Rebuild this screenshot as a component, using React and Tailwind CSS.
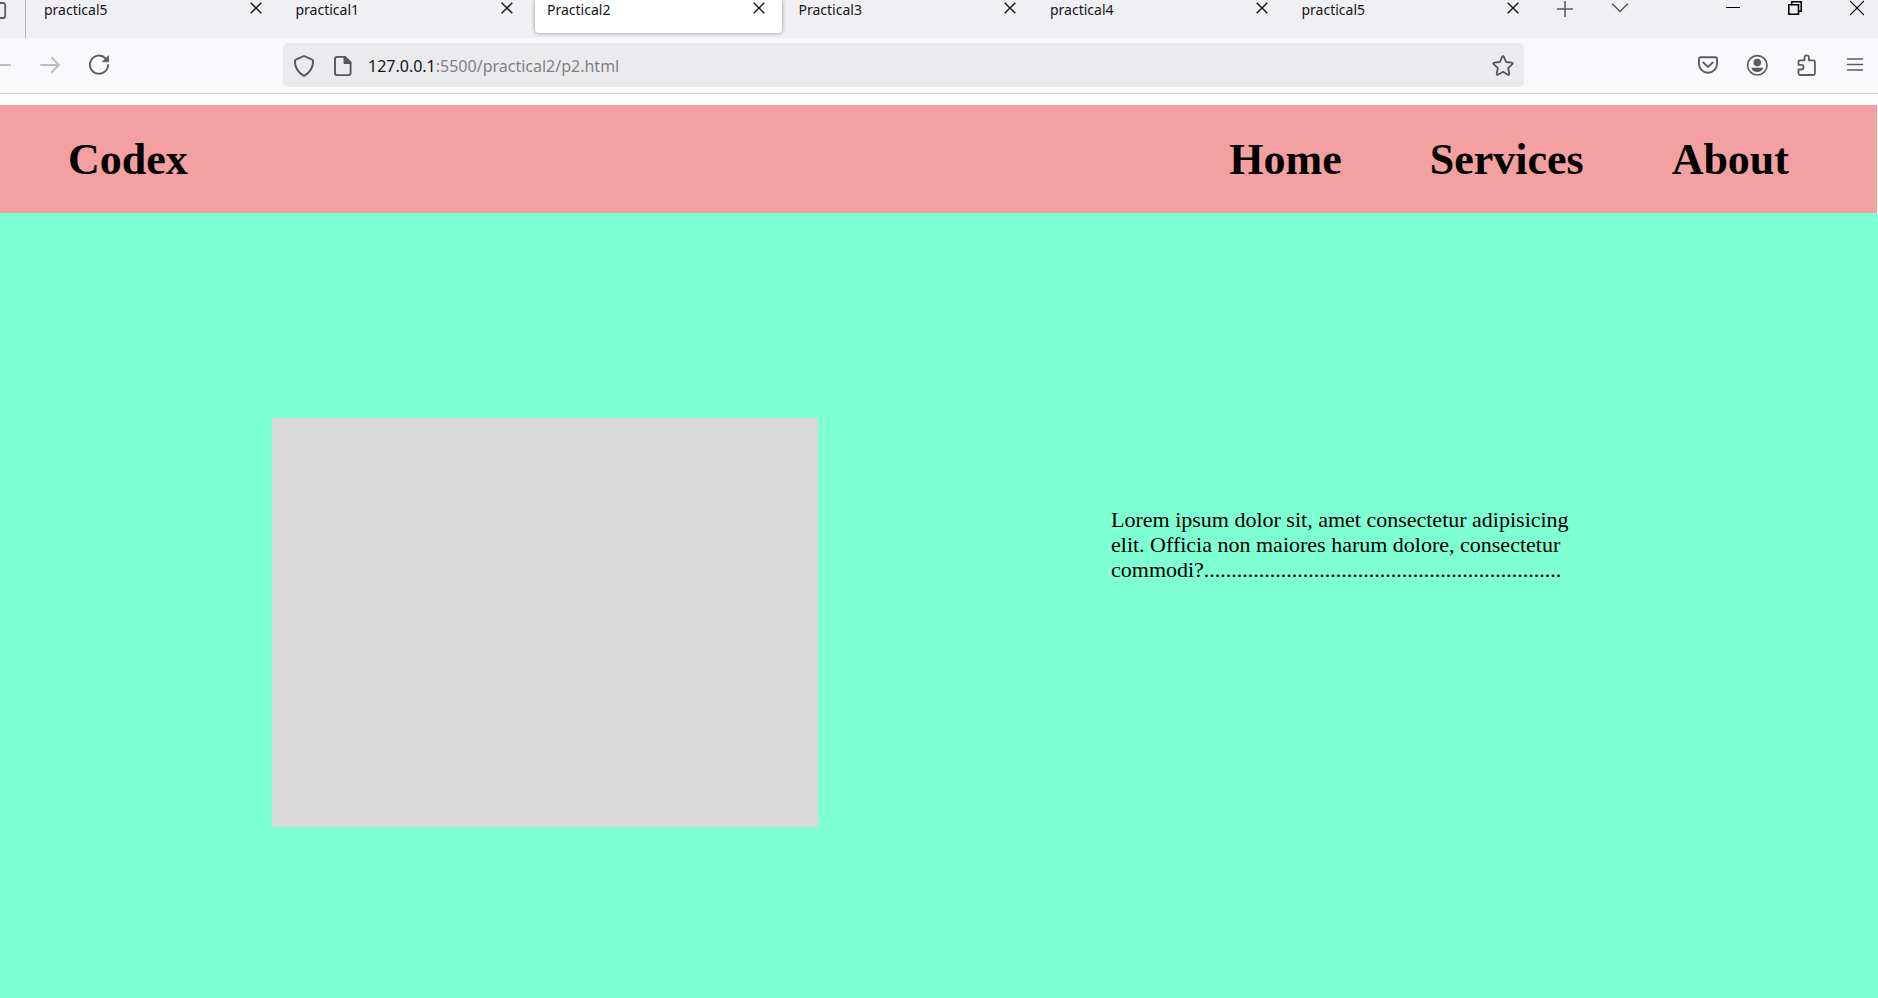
import React from "react";

const tabs = ["practical5", "practical1", "Practical2", "Practical3", "practical4", "practical5"];

function Close() {
  return (
    <svg width="12" height="12" viewBox="0 0 12 12" fill="none" stroke="#15141a" strokeWidth="1.4">
      <path d="M.7.7l10.600 10.600M11.300.7L.7 11.300" />
    </svg>
  );
}

function Tab({ title, active }) {
  return (
    <div
      className={
        active
          ? "flex h-[33px] min-w-0 flex-1 items-start rounded-b-[4px] bg-white pl-3 pr-[15px] shadow-[0_0_4px_rgba(0,0,0,0.4)]"
          : "flex h-[33px] min-w-0 flex-1 items-start pl-3 pr-[15px]"
      }
    >
      <button className="grow text-left text-[14px] leading-[19px] text-[#15141a]">{title}</button>
      <button aria-label={"Close " + title} className="flex size-4 items-center justify-center">
        <Close />
      </button>
    </div>
  );
}

function TabBar() {
  return (
    <div className="flex h-[38px] items-start overflow-hidden bg-[#f0eff4]">
      <button aria-label="Tab overview" className="h-[38px] w-[26px] shrink-0 border-r border-[#b4b3ba]">
        <svg width="8" height="20" viewBox="0 0 8 20" fill="none" stroke="#5b5b66" strokeWidth="1.800" className="-mt-[18px]">
          <path d="M-6 3H3.200a2 2 0 0 1 2 2v11a2 2 0 0 1-2 2H-6" />
        </svg>
      </button>
      <div className="ml-[6px] flex w-[1504px] shrink gap-[5px]">
        {tabs.map((t, i) => (
          <Tab key={i} title={t} active={i === 2} />
        ))}
      </div>
      <button aria-label="New tab" className="ml-5 shrink-0">
        <svg width="18" height="18" viewBox="0 0 18 18" fill="none" stroke="#5b5b66" strokeWidth="1.600">
          <path d="M9 1v16M1 9h16" />
        </svg>
      </button>
      <button aria-label="List all tabs" className="ml-[37px] shrink-0">
        <svg width="18" height="16" viewBox="0 0 18 16" fill="none" stroke="#5b5b66" strokeWidth="1.600" strokeLinecap="round" strokeLinejoin="round">
          <path d="M1.500 4L9 11.500 16.500 4" />
        </svg>
      </button>
      <div className="ml-auto flex shrink-0 gap-12 pr-[14px]">
        <button aria-label="Minimize">
          <svg width="14" height="16" viewBox="0 0 14 16" stroke="#000"><path d="M0 7.500h14" /></svg>
        </button>
        <button aria-label="Restore">
          <svg width="14" height="16" viewBox="0 0 14 16" fill="none" stroke="#000" strokeWidth="1.600">
            <path d="M.8 4.800h9.700v9.400H.8zM3.700 4.500V1.800h9.500v9.400h-2.700" />
          </svg>
        </button>
        <button aria-label="Close window">
          <svg width="14" height="16" viewBox="0 0 14 16" stroke="#000" strokeWidth="1.200"><path d="M0 1l14 14M14 1L0 15" /></svg>
        </button>
      </div>
    </div>
  );
}

function NavBar() {
  return (
    <div className="flex h-14 items-center border-b border-[#cccccc] bg-[#f9f9fb] pb-px">
      <button aria-label="Back" disabled className="w-[38px]">
        <svg width="12" height="20" viewBox="0 0 12 20" fill="none" stroke="#bebec4" strokeWidth="2" strokeLinecap="round">
          <path d="M-8 10H10M-1 3l-7 7 7 7" />
        </svg>
      </button>
      <button aria-label="Forward" disabled className="w-[50px]">
        <svg width="24" height="20" viewBox="0 0 24 20" fill="none" stroke="#bebec4" strokeWidth="2" strokeLinecap="round" strokeLinejoin="round">
          <path d="M3 10h18M14 3l7 7-7 7" />
        </svg>
      </button>
      <button aria-label="Reload">
        <svg width="22" height="22" viewBox="0 0 22 22" fill="none" stroke="#5b5b66" strokeWidth="1.900" strokeLinecap="round">
          <path d="M17.600 4.400A9.100 9.100 0 1 0 20.100 11" />
          <path d="M20.500 2v5.800h-5.800z" fill="#5b5b66" strokeWidth="0.800" strokeLinejoin="round" />
        </svg>
      </button>
      <div className="ml-[173px] flex h-11 w-[1241px] shrink items-center rounded-[5px] bg-[#ebebed] pl-[10px] pr-[10px] pt-[2px]">
        <button aria-label="Site protections">
          <svg width="22" height="22" viewBox="0 0 22 22" fill="none" stroke="#55555a" strokeWidth="1.900" strokeLinejoin="round">
            <path d="M11 1l8.200 3.600c.6.300.9.700.9 1.300 0 6-2.600 11.500-9.100 14.900C4.500 17.400 1.900 11.900 1.900 5.900c0-.6.300-1 .9-1.300z" />
          </svg>
        </button>
        <button aria-label="Site information" className="ml-[17px]">
          <svg width="22" height="22" viewBox="0 0 22 22" fill="none" stroke="#55555a" strokeWidth="1.900" strokeLinejoin="round">
            <path d="M5 1.900h8L18.600 7.500v10.600a2 2 0 0 1-2 2H5a2 2 0 0 1-2-2V3.900a2 2 0 0 1 2-2z" />
            <path d="M12.500 2v6h6z" fill="#55555a" />
          </svg>
        </button>
        <a href="#page" className="ml-[14px] grow text-[16px] leading-6 text-[#808085]">
          <span className="text-[#15141a]">127.0.0.1</span>:5500/practical2/p2.html
        </a>
        <button aria-label="Bookmark this page">
          <svg width="22" height="22" viewBox="0 0 22 22" fill="none" stroke="#55555a" strokeWidth="1.800" strokeLinejoin="round">
            <path d="M10.200 1.700a.9.900 0 0 1 1.600 0l2.300 5.300 5.700.6a.9.900 0 0 1 .5 1.600l-4.200 3.900 1.200 5.700a.9.900 0 0 1-1.300 1L11 16.800l-5 3a.9.900 0 0 1-1.300-1l1.200-5.700L1.700 9.200a.9.900 0 0 1 .5-1.600L7.900 7z" />
          </svg>
        </button>
      </div>
      <div className="ml-auto flex shrink-0 gap-[27px] pr-[12px]">
        <button aria-label="Save to Pocket">
          <svg width="22" height="22" viewBox="0 0 22 22" fill="none" stroke="#5b5b66" strokeWidth="1.900" strokeLinecap="round" strokeLinejoin="round">
            <path d="M3.700 3.200h14.600a1.700 1.700 0 0 1 1.700 1.700v4.900a9 9 0 0 1-18 0V4.900a1.700 1.700 0 0 1 1.700-1.700z" />
            <path d="M6.300 8.500L11 12.900l4.700-4.400" />
          </svg>
        </button>
        <button aria-label="Account">
          <svg width="22" height="22" viewBox="0 0 22 22" fill="none" stroke="#5b5b66" strokeWidth="1.700">
            <circle cx="11.300" cy="11.300" r="9.700" />
            <circle cx="11.300" cy="8.600" r="3.800" fill="#5b5b66" stroke="none" />
            <path d="M5.500 13.700h11.600c0 2.500-2.800 4.200-5.800 4.200s-5.800-1.700-5.800-4.200z" fill="#5b5b66" stroke="none" />
          </svg>
        </button>
        <button aria-label="Extensions">
          <svg width="22" height="22" viewBox="0 0 22 22" fill="none" stroke="#5b5b66" strokeWidth="1.800" strokeLinejoin="round">
            <path d="M5 6.300h4.500V3.500a2.200 2.200 0 0 1 4.400 0v2.800h4.500a1.500 1.500 0 0 1 1.500 1.500v11.700a1.500 1.500 0 0 1-1.500 1.500H5a1.500 1.500 0 0 1-1.500-1.500v-4h2.700a2.300 2.300 0 0 0 0-4.600H3.500V7.800A1.500 1.500 0 0 1 5 6.300z" />
          </svg>
        </button>
        <button aria-label="Application menu">
          <svg width="22" height="22" viewBox="0 0 22 22" fill="none" stroke="#5b5b66" strokeWidth="1.600" strokeLinecap="round">
            <path d="M3.500 5h15M3.500 10.500h15M3.500 16h15" />
          </svg>
        </button>
      </div>
    </div>
  );
}

export default function App() {
  return (
    <div className="flex min-h-screen flex-col bg-white font-['Noto_Sans','Open_Sans',sans-serif]">
      <TabBar />
      <NavBar />
      <div id="page" className="mt-[11px] flex grow flex-col font-['Liberation_Serif',serif] text-black">
        <header className="mr-px flex h-[108px] items-center justify-between bg-[#f4a0a0] pl-[68px] pr-[88px] pt-[2px] text-[44px] font-bold leading-[52px]">
          <h1>Codex</h1>
          <nav className="flex gap-[88px]">
            <a href="#home">Home</a>
            <a href="#services">Services</a>
            <a href="#about">About</a>
          </nav>
        </header>
        <main className="flex grow items-start bg-[#7fffd4] pl-[272px] pt-[205px]">
          <div className="h-[409px] w-[546px] bg-[#d9d9d9]" />
          <p className="ml-[293px] mt-[89px] w-[460px] text-[22px] leading-[25px]">
            Lorem ipsum dolor sit, amet consectetur adipisicing elit. Officia non maiores harum dolore, consectetur
            commodi?.................................................................
          </p>
        </main>
      </div>
    </div>
  );
}
